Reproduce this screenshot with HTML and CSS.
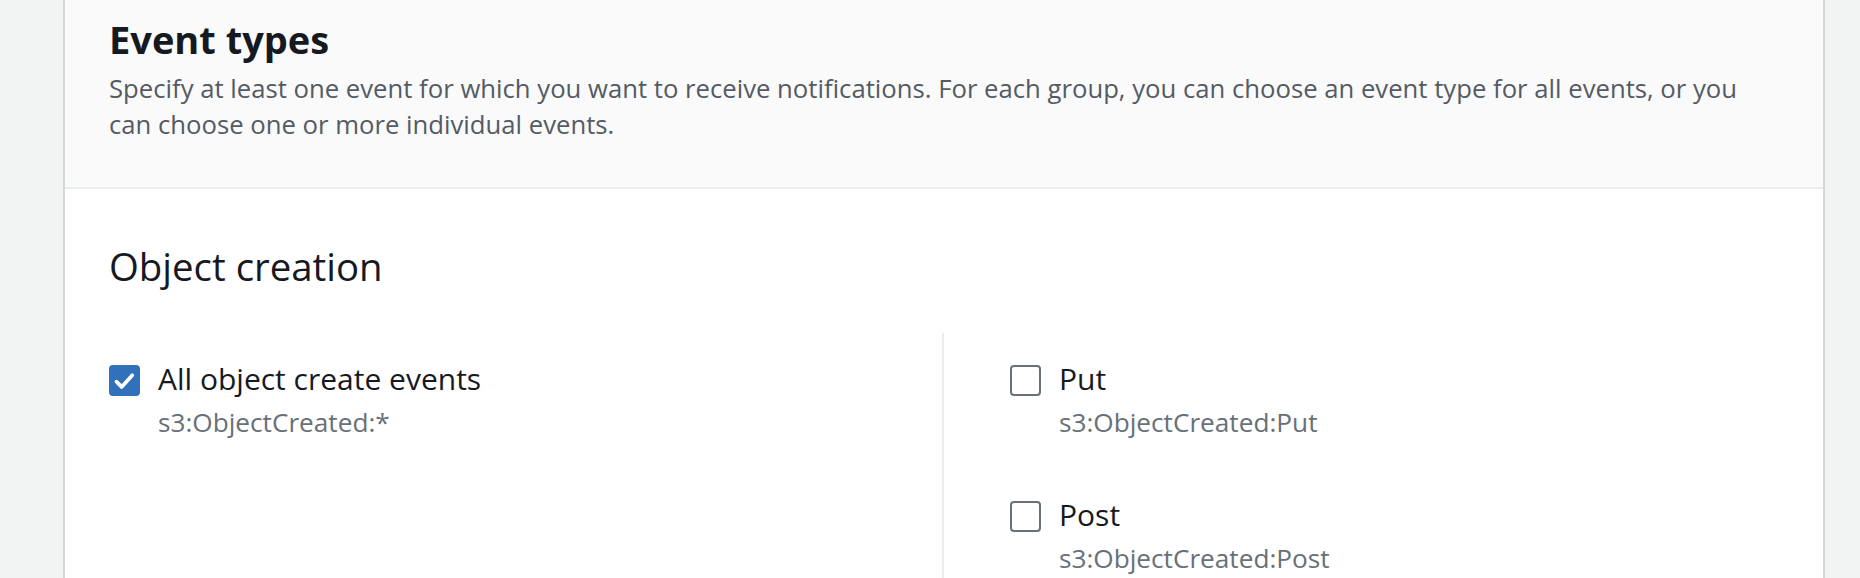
FILE: index.html
```html
<!DOCTYPE html>
<html lang="en">
<head>
<meta charset="utf-8">
<title>Event types</title>
<link rel="stylesheet" href="styles.css">
</head>
<body>
<div class="page">
  <section class="card">
    <header class="card-header">
      <h2 class="title">Event types</h2>
      <p class="desc">Specify at least one event for which you want to receive notifications. For each group, you can choose an event type for all events, or you can choose one or more individual events.</p>
    </header>
    <div class="card-body">
      <h3 class="group-title">Object creation</h3>
      <div class="columns">
        <div class="col">
          <label class="option">
            <span class="box checked">
              <svg viewBox="0 0 16 16" width="30" height="30"><polyline points="3.2,8.4 6.3,11.5 12.6,4.6" fill="none" stroke="#fff" stroke-width="2.2" stroke-linecap="round" stroke-linejoin="round"/></svg>
            </span>
            <span class="text">
              <span class="label">All object create events</span>
              <span class="sub">s3:ObjectCreated:*</span>
            </span>
          </label>
        </div>
        <div class="col col-right">
          <label class="option">
            <span class="box"></span>
            <span class="text">
              <span class="label">Put</span>
              <span class="sub">s3:ObjectCreated:Put</span>
            </span>
          </label>
          <label class="option">
            <span class="box"></span>
            <span class="text">
              <span class="label">Post</span>
              <span class="sub">s3:ObjectCreated:Post</span>
            </span>
          </label>
        </div>
      </div>
    </div>
  </section>
</div>
</body>
</html>
```

FILE: styles.css
```css
* { box-sizing: border-box; }
html, body {
  margin: 0;
  padding: 0;
  background: #f2f3f3;
  font-family: "Open Sans", "Noto Sans", sans-serif;
  color: #16191f;
}
.page {
  padding: 0 35px 0 63px;
  height: 578px;
  overflow: hidden;
}
.card {
  background: #fff;
  border-left: 2px solid #d3d7d8;
  border-right: 2px solid #d3d7d8;
  min-height: 700px;
}
.card-header {
  background: #fafafa;
  border-bottom: 2px solid #eaeded;
  padding: 16px 44px 44px 44px;
}
.title {
  margin: 0;
  font-size: 38px;
  line-height: 46px;
  font-weight: 700;
  color: #16191f;
}
.desc {
  margin: 9px 0 0 0;
  font-size: 25.7px;
  line-height: 36px;
  color: #545b64;
}
.card-body {
  padding: 54px 44px 0 44px;
}
.group-title {
  margin: 0;
  font-size: 38.4px;
  line-height: 46px;
  font-weight: 400;
  color: #16191f;
}
.columns {
  margin-top: 44px;
  display: grid;
  grid-template-columns: calc(50% - 2px) 1fr;
}
.col {
  padding-top: 23px;
  display: flex;
  flex-direction: column;
  gap: 52px;
}
.col-right {
  border-left: 2px solid #eaeded;
  padding-left: 66px;
  min-height: 300px;
}
.option {
  display: flex;
  align-items: flex-start;
  gap: 18px;
}
.box {
  flex: none;
  width: 31px;
  height: 31px;
  margin-top: 9px;
  border: 2px solid #687078;
  border-radius: 4px;
  background: #fff;
  display: flex;
  align-items: center;
  justify-content: center;
}
.box.checked {
  background: #3171b9;
  border-color: #3171b9;
}
.box svg { display: block; }
.text {
  display: flex;
  flex-direction: column;
  padding-top: 3px;
}
.label {
  font-size: 30px;
  line-height: 40px;
  color: #16191f;
}
.sub {
  margin-top: 5px;
  font-size: 26.2px;
  line-height: 36px;
  color: #687078;
}
```
